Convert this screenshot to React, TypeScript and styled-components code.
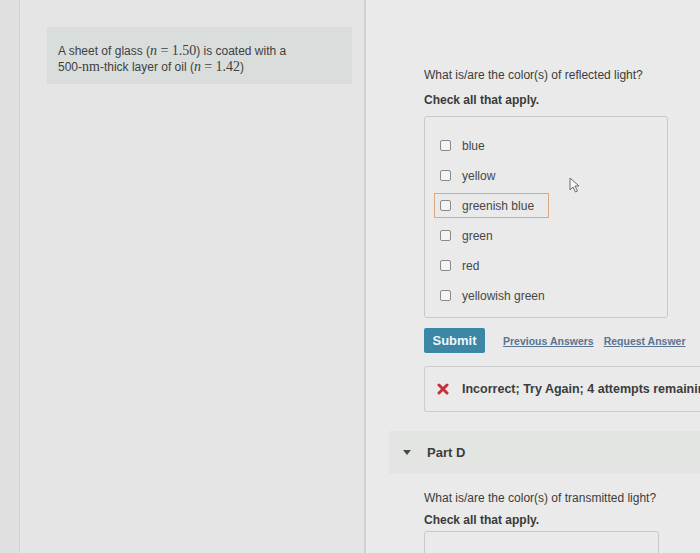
import React from 'react';
import styled, { createGlobalStyle } from 'styled-components';

const GlobalStyle = createGlobalStyle`
  html, body {
    margin: 0;
    padding: 0;
    background: #e7e8e7;
    font-family: "Liberation Sans", Arial, sans-serif;
    color: #3a3a3a;
  }
`;

const Page = styled.div`
  display: flex;
  width: 700px;
  height: 553px;
  overflow: hidden;
`;

const Edge = styled.div`
  width: 19px;
  flex: none;
  background: #dfe0df;
  border-right: 1px solid #d2d3d2;
`;

const LeftPane = styled.div`
  width: 346px;
  flex: none;
  background: #e4e5e4;
  border-right: 2px solid #cfd0cf;
  padding-top: 27px;
  box-sizing: border-box;
`;

const ProblemBox = styled.div`
  margin-left: 27px;
  width: 305px;
  height: 57px;
  background: #d9dedc;
  padding: 16px 0 0 11px;
  box-sizing: border-box;
  font-size: 12px;
  line-height: 16px;
  color: #404040;
`;

const Math = styled.span`
  font-family: "Liberation Serif", "Times New Roman", serif;
  font-size: 14px;
`;

const Var = styled(Math)`
  font-style: italic;
`;

const RightPane = styled.div`
  flex: 1;
  background: #e9eae9;
  display: flex;
  flex-direction: column;
  padding-top: 68px;
  min-width: 0;
  & > * {
    flex: none;
  }
`;

const Section = styled.div`
  padding-left: 58px;
  display: flex;
  flex-direction: column;
`;

const Question = styled.div`
  font-size: 12px;
  color: #3c3c3c;
  height: 16px;
`;

const Instruction = styled.div<{ $gap: number }>`
  font-size: 12px;
  font-weight: bold;
  color: #3a3a3a;
  margin-top: ${({ $gap }) => $gap}px;
  height: 16px;
`;

const OptionsBox = styled.div<{ $h: number; $w: number; $gap: number }>`
  margin-top: ${({ $gap }) => $gap}px;
  width: ${({ $w }) => $w}px;
  height: ${({ $h }) => $h}px;
  border: 1px solid #c9c9c9;
  border-radius: 3px;
  box-sizing: border-box;
  padding: 16px 0 0 9px;
  display: flex;
  flex-direction: column;
  gap: 5px;
  position: relative;
`;

const Option = styled.label<{ $focus?: boolean }>`
  display: flex;
  align-items: center;
  gap: 11px;
  height: 25px;
  box-sizing: border-box;
  padding: 0 0 0 5px;
  width: fit-content;
  min-width: ${({ $focus }) => ($focus ? '100px' : '0')};
  padding-right: ${({ $focus }) => ($focus ? '14px' : '0')};
  border: 1px solid ${({ $focus }) => ($focus ? '#d9a982' : 'transparent')};
  font-size: 12px;
  color: #474747;
`;

const Box = styled.span`
  width: 9px;
  height: 9px;
  border: 1px solid #8a8a8a;
  border-radius: 2px;
  background: #f4f4f4;
`;

const Cursor = styled.svg`
  position: absolute;
  left: 144px;
  top: 60px;
`;

const Actions = styled.div`
  display: flex;
  align-items: center;
  margin-top: 10px;
  gap: 18px;
`;

const SubmitButton = styled.button`
  width: 61px;
  height: 25px;
  border: none;
  border-radius: 2px;
  background: #3b87a5;
  color: #f2f6f8;
  font-family: "Liberation Sans", Arial, sans-serif;
  font-size: 13px;
  font-weight: bold;
  padding: 0;
`;

const Links = styled.div`
  display: flex;
  gap: 10px;
`;

const LinkText = styled.a`
  font-size: 10.5px;
  font-weight: bold;
  color: #5a7593;
  text-decoration: underline;
`;

const Feedback = styled.div`
  margin-top: 13px;
  height: 44px;
  border: 1px solid #cdcdcd;
  border-right: none;
  border-radius: 3px 0 0 3px;
  display: flex;
  align-items: center;
  padding-left: 12px;
  gap: 13px;
  white-space: nowrap;
  overflow: hidden;
  font-size: 12.5px;
  font-weight: bold;
  color: #3c3c3c;
`;

const CrossIcon = styled.svg`
  flex: none;
`;

const PartBar = styled.div`
  margin-top: 19px;
  margin-left: 23px;
  height: 43px;
  background: #e3e5e3;
  display: flex;
  align-items: center;
  padding-left: 14px;
  gap: 16px;
  font-size: 13px;
  font-weight: bold;
  color: #3c3c3c;
`;

const Caret = styled.span`
  width: 0;
  height: 0;
  border-left: 4px solid transparent;
  border-right: 4px solid transparent;
  border-top: 5px solid #4a4a4a;
`;

const PartBody = styled(Section)`
  padding-top: 17px;
`;

const options = ['blue', 'yellow', 'greenish blue', 'green', 'red', 'yellowish green'];

const App = () => {
  return (
    <Page>
      <GlobalStyle />
      <Edge />
      <LeftPane>
        <ProblemBox>
          A sheet of glass (<Var>n</Var> <Math>=</Math> <Math>1.50</Math>) is coated with a
          <br />
          500-<Math>nm</Math>-thick layer of oil (<Var>n</Var> <Math>=</Math> <Math>1.42</Math>)
        </ProblemBox>
      </LeftPane>
      <RightPane>
        <Section>
          <Question>What is/are the color(s) of reflected light?</Question>
          <Instruction $gap={9}>Check all that apply.</Instruction>
          <OptionsBox $h={202} $w={244} $gap={7}>
            {options.map((o) => (
              <Option key={o} $focus={o === 'greenish blue'}>
                <Box />
                {o}
              </Option>
            ))}
            <Cursor width="12" height="16" viewBox="0 0 12 16">
              <path d="M1 1 L1 13 L4 10 L6.5 15 L8.5 14 L6 9 L10 9 Z" fill="#f6f6f6" stroke="#6a6a6a" strokeWidth="1" />
            </Cursor>
          </OptionsBox>
          <Actions>
            <SubmitButton>Submit</SubmitButton>
            <Links>
              <LinkText>Previous Answers</LinkText>
              <LinkText>Request Answer</LinkText>
            </Links>
          </Actions>
          <Feedback>
            <CrossIcon width="12" height="12" viewBox="0 0 12 12">
              <path d="M2 2 L10 10 M10 2 L2 10" stroke="#c7303a" strokeWidth="3" strokeLinecap="round" />
            </CrossIcon>
            Incorrect; Try Again; 4 attempts remaining
          </Feedback>
        </Section>
        <PartBar>
          <Caret />
          Part D
        </PartBar>
        <PartBody>
          <Question>What is/are the color(s) of transmitted light?</Question>
          <Instruction $gap={6}>Check all that apply.</Instruction>
          <OptionsBox $h={60} $w={235} $gap={2} />
        </PartBody>
      </RightPane>
    </Page>
  );
};

export default App;
